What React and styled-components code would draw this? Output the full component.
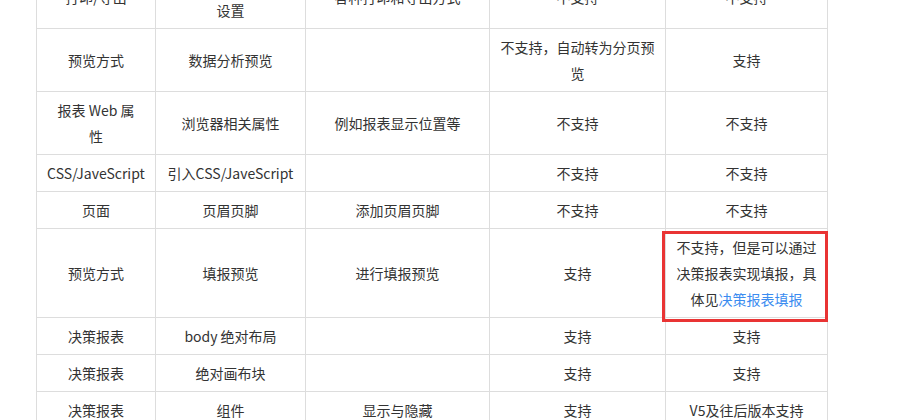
import React from "react";
import styled, { createGlobalStyle } from "styled-components";

const GlobalStyle = createGlobalStyle`
  body {
    margin: 0;
    background: #fff;
    font-family: "Noto Sans CJK SC", "Noto Sans", sans-serif;
  }
`;

const Page = styled.div`
  padding-left: 36px;
  /* the page is scrolled: the first row sits partly above the viewport */
  margin-top: -35px;
`;

const Table = styled.table`
  border-collapse: collapse;
  table-layout: fixed;
  width: 791px;
  color: #333;
  font-size: 14px;
  line-height: 26px;
`;

const Cell = styled.td`
  position: ${(props) => (props.$flagged ? "relative" : "static")};
  border: 1px solid #ddd;
  padding: 5px 10px;
  text-align: center;
  vertical-align: middle;
  word-break: break-all;
`;

const Flag = styled.span`
  position: absolute;
  left: -4px;
  right: -1px;
  top: 2px;
  bottom: -5px;
  border: 3px solid #e93434;
  pointer-events: none;
`;

const DocLink = styled.a`
  color: #3b8cf0;
  text-decoration: none;
`;

const widths = [119, 150, 184, 176, 162];

const rows = [
  ["打印/导出", <>打印/导出纸张<br />设置</>, "各种打印和导出方式", "不支持", "不支持"],
  ["预览方式", "数据分析预览", "", "不支持，自动转为分页预览", "支持"],
  [<>报表 Web 属<br />性</>, "浏览器相关属性", "例如报表显示位置等", "不支持", "不支持"],
  ["CSS/JaveScript", "引入CSS/JaveScript", "", "不支持", "不支持"],
  ["页面", "页眉页脚", "添加页眉页脚", "不支持", "不支持"],
  [
    "预览方式",
    "填报预览",
    "进行填报预览",
    "支持",
    {
      flagged: true,
      content: (
        <>
          不支持，但是可以通过决策报表实现填报，具体见
          <DocLink href="#">决策报表填报</DocLink>
        </>
      ),
    },
  ],
  ["决策报表", "body 绝对布局", "", "支持", "支持"],
  ["决策报表", "绝对画布块", "", "支持", "支持"],
  ["决策报表", "组件", "显示与隐藏", "支持", "V5及往后版本支持"],
];

function App() {
  return (
    <>
      <GlobalStyle />
      <Page>
        <Table>
          <colgroup>
            {widths.map((w, i) => (
              <col key={i} style={{ width: w }} />
            ))}
          </colgroup>
          <tbody>
            {rows.map((row, r) => (
              <tr key={r}>
                {row.map((cell, c) => {
                  if (cell && cell.flagged) {
                    return (
                      <Cell key={c} $flagged>
                        {cell.content}
                        <Flag />
                      </Cell>
                    );
                  }
                  return <Cell key={c}>{cell}</Cell>;
                })}
              </tr>
            ))}
          </tbody>
        </Table>
      </Page>
    </>
  );
}

export default App;
